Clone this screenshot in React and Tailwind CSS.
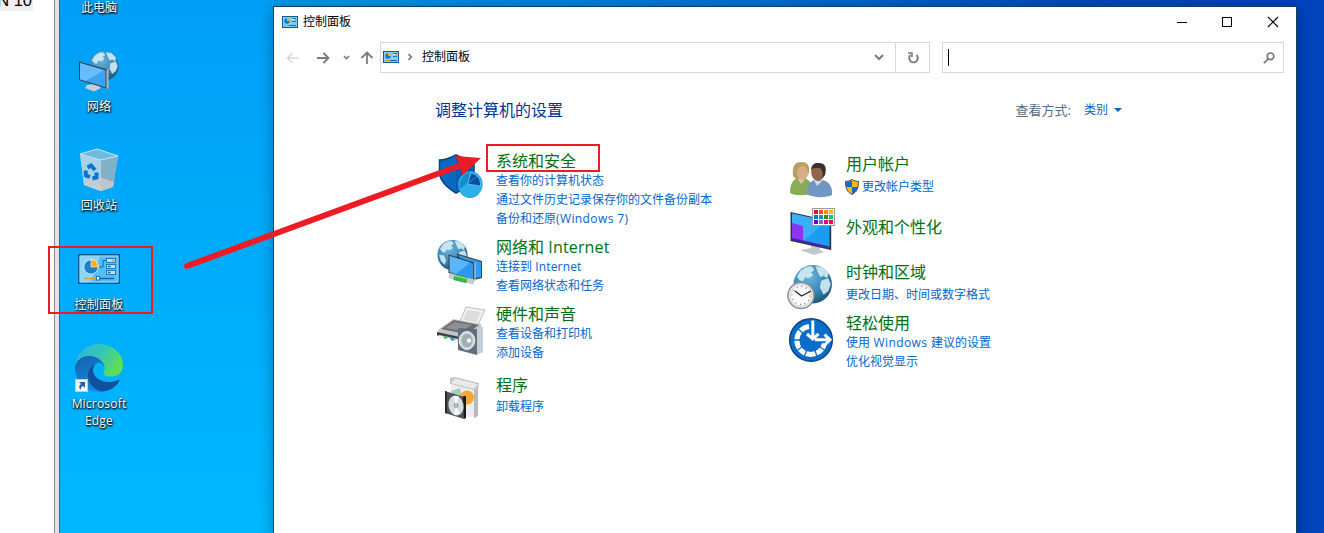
import { useId } from "react";

const GLOBE_LAND =
  "M4 11 L7 6 L12 2.5 L17 2 L19 5 L16 7 L18 10 L14 12 L11 11 L9 15 L6 14 Z M21 2 L27 3 L32 8 L31 12 L28 10 L25 11 L23 7 Z M26 15 L32 13 L34 18 L32 24 L28 27 L25 21 Z M3 18 L8 19 L10 24 L9 29 L5 25 Z";

function Globe({ x = 0, y = 0, size = 36 }) {
  const id = useId();
  return (
    <svg x={x} y={y} width={size} height={size} viewBox="0 0 36 36">
      <defs>
        <radialGradient id={id} cx="0.4" cy="0.3" r="0.75">
          <stop offset="0" stopColor="#6db7dc" />
          <stop offset="0.55" stopColor="#3b8ab8" />
          <stop offset="1" stopColor="#1d4f70" />
        </radialGradient>
      </defs>
      <circle cx="18" cy="18" r="17.5" fill={`url(#${id})`} />
      <path d={GLOBE_LAND} fill="#d5ecf3" stroke="#d5ecf3" strokeWidth="0.8" strokeLinejoin="round" opacity="0.9" />
    </svg>
  );
}

function NetworkDesktopIcon() {
  return (
    <svg width="48" height="48" viewBox="0 0 48 48">
      <Globe x={14} y={4} size={30} />
      <path d="M12 38 L22 36.500 L26 41 L19 44.500 L10 41 Z" fill="#c9d0d5" />
      <path d="M4 14.500 L32.500 22.500 V42 L4 33 Z" fill="#36444f" />
      <path d="M31.500 22.500 L33.500 22 V41.500 L31.500 42 Z" fill="#b4b8bb" />
      <path d="M5 16 L30.500 23.500 V40.200 L5 32.200 Z" fill="#3aa5f8" />
      <path d="M5 16 L29 23 L11 34 L5 32.200 Z" fill="#66bcff" />
    </svg>
  );
}

function RecycleIcon() {
  return (
    <svg width="48" height="48" viewBox="0 0 48 48">
      <path d="M5 8 L22 3 L43 10 L38 41 L26 45 L9 39 Z" fill="#98c4dd" />
      <path d="M5 8 L26 14 L26 45 L9 39 Z" fill="#a9d2e8" />
      <path d="M26 14 L43 10 L38 41 L26 45 Z" fill="#83b0c9" />
      <path d="M8.500 35 L22 30 L39 36 L38 41 L26 45 L9 39 Z" fill="#c9cacc" opacity="0.85" />
      <path d="M5 8 L22 3 L43 10 L26 14 Z" fill="#6dbbe0" stroke="#c4e3f0" strokeWidth="1" />
      <g fill="none" stroke="#0a73cf" strokeWidth="4">
        <path d="M12.500 21.500 L16 19.500 L20 24" />
        <path d="M10.500 24.500 L11 29.500 L15 31" />
        <path d="M21.500 26.500 L21.500 31.500 L17.500 32.500" />
      </g>
    </svg>
  );
}

function PanelIcon({ width = 42, height = 30 }) {
  return (
    <svg width={width} height={height} viewBox="0 0 42 30" preserveAspectRatio="none">
      <rect width="42" height="30" fill="#07598f" />
      <rect x="1.500" y="1.500" width="39" height="27" fill="#58bdf7" />
      <path d="M2 2 H22 L13 28 H2 Z" fill="#8bd5fc" />
      <path d="M2 2 H40 V28 H2 Z" fill="none" stroke="#93d7fb" strokeWidth="1" />
      <circle cx="13" cy="13" r="7.200" fill="#1d7fcb" stroke="#e4f5ff" strokeWidth="0.800" />
      <path d="M13 13 V5.500 A7.500 7.500 0 0 1 20.500 13 Z" fill="#ffb11b" stroke="#fff" strokeWidth="0.600" />
      <path d="M21 13 H25 V6.500 H28" fill="none" stroke="#0d65a8" />
      <g fill="#b5e4ff" stroke="#1474b8" strokeWidth="0.900">
        <rect x="28.500" y="4.500" width="9" height="4" />
        <rect x="28.500" y="10.500" width="9" height="4" />
        <rect x="28.500" y="16.500" width="9" height="4" />
      </g>
      <path d="M34 6.500 H36.500" stroke="#f58b1f" strokeWidth="1.500" />
      <path d="M30 12.500 H32.500 M30 18.500 H32.500" stroke="#0d65a8" strokeWidth="1.500" />
      <path d="M6 24.500 H20" stroke="#e99a26" strokeWidth="1.500" />
      <path d="M20 24.500 H36" stroke="#0c66b3" strokeWidth="1.500" />
      <rect x="18.500" y="22.500" width="3" height="3.500" fill="#fff" stroke="#1c75b5" />
    </svg>
  );
}

function TinyPanelIcon() {
  return (
    <svg width="16" height="12" viewBox="0 0 16 12">
      <rect width="16" height="12" fill="#0a5c93" />
      <rect x="1" y="1" width="14" height="10" fill="#7fd0fb" />
      <circle cx="5" cy="5" r="2.700" fill="#1976c4" />
      <path d="M5 5 V2 A3 3 0 0 1 8 5 Z" fill="#ffb11b" />
      <rect x="10" y="2.500" width="4" height="1.500" fill="#fff" />
      <path d="M10 2.500 H14 M10 5.500 H14" stroke="#1976c4" />
      <path d="M12 3.700 H14" stroke="#f58b1f" />
      <path d="M2 9.500 H7" stroke="#e99a26" />
      <path d="M7 9.500 H14" stroke="#0c66b3" />
    </svg>
  );
}

function EdgeIcon() {
  return (
    <svg width="48" height="48" viewBox="0 0 48 48">
      <defs>
        <linearGradient id="edgeTop" x1="0" y1="0.2" x2="1" y2="0.6">
          <stop offset="0" stopColor="#2fb3df" />
          <stop offset="0.5" stopColor="#35c6b8" />
          <stop offset="1" stopColor="#62e14b" />
        </linearGradient>
        <linearGradient id="edgeBody" x1="0" y1="0" x2="0.4" y2="1">
          <stop offset="0" stopColor="#1463ad" />
          <stop offset="1" stopColor="#1687e0" />
        </linearGradient>
      </defs>
      <path d="M0 23 C1 9 11 0 24 0 C38 0 48 10 48 21 C48 29 42 32.500 36 32.500 C30 32.500 27.500 31 28.500 28.500 C30 26 30.500 23 28 19.500 C25 15.500 20 12 14 12 C7 12 1 16.500 0 23 Z" fill="url(#edgeTop)" />
      <path d="M0 23 C1 16.500 7 12 14 12 C22 12 29.500 17.500 29.500 24 C29 20.500 26 18.500 24 18.500 C20 18.500 17.500 24 18 29 C19 38 26 44 34 46 C31 47.500 28 48 24 48 C11 48 0 37 0 23 Z" fill="url(#edgeBody)" />
      <path d="M20 20.500 C15 23 12 28 13 34 C15 43 24 50 34 46 C39 44 43 40 44.700 36.500 C44.500 35.500 44 35.500 43 36 C40 37.500 37 38 33 38 C25 38 18 32 18 27 C18 24 18.500 22 20 20.500 Z" fill="#11509c" />
      <rect x="0.500" y="35.500" width="12" height="12" fill="#f4f6f8" stroke="#c8cdd2" />
      <path d="M4 38 H10 V44 L8 42 C6 43 5.500 44.500 5.800 46 C3.500 43.500 4 41 6 40 Z" fill="#2460a8" />
    </svg>
  );
}

function SecurityIcon() {
  return (
    <svg width="48" height="48" viewBox="0 0 48 48">
      <path d="M3.500 8 C9 8 14 6 20 2.800 C26 6 31 8 38 8 V20 C37 30 29 37 20 41 C10 35 3.500 29 3.500 20 Z" fill="#0869c4" stroke="#0b437a" strokeWidth="1.500" />
      <path d="M20 3.500 C26 7 31 8.500 37 8.500 V20 C36 30 28 36 20 40 Z" fill="#0b5bb0" />
      <ellipse cx="34" cy="33" rx="12" ry="13" fill="#1f9fdd" />
      <path d="M24 38 A12 13 0 1 1 45 39 C38 48 26 47 24 38 Z" fill="#2db0ea" />
      <path d="M34 20 C27 22 23 28 23.500 37 L32 31 Z" fill="#158dcb" />
      <path d="M35 21 L31.500 32 L44.500 34 C45 27 41 22 35 21 Z" fill="#0a4f9f" stroke="#6ccaf5" strokeWidth="0.700" />
      <path d="M31.500 32 L41 24" stroke="#58a8e0" strokeWidth="0.700" />
    </svg>
  );
}

function InternetIcon() {
  return (
    <svg width="48" height="48" viewBox="0 0 48 48">
      <Globe x={1} y={1.5} size={31} />
      <path d="M21 15.500 L46 23 V40 L38 42 L21 30 Z" fill="#3a4854" />
      <path d="M22 17 L45 24 V39 L38 40 Z" fill="#2f9ef0" />
      <path d="M12.500 16.500 L38.500 24.500 V43 L12.500 35 Z" fill="#34414c" />
      <path d="M13.700 18 L37.200 25.400 V41.200 L13.700 34 Z" fill="#2b98ee" />
      <path d="M13.700 18 L34 24.500 L20 36 L13.700 34 Z" fill="#5ab5fb" />
      <path d="M38.500 24.500 L39.500 24.200 V42.500 L38.500 43 Z" fill="#d0d5d8" />
      <path d="M13 37.500 L38 44" stroke="#c5cbce" strokeWidth="5" />
      <path d="M18 39 L31 42.300" stroke="#3bb54a" strokeWidth="6" />
      <path d="M18 37.500 L31 40.800" stroke="#82dc82" strokeWidth="1.500" />
    </svg>
  );
}

function PrinterIcon() {
  return (
    <svg width="50" height="50" viewBox="0 0 50 50">
      <path d="M30 1 L49 4 L42 19 L24 15 Z" fill="#f1f1f1" stroke="#b0b0b0" strokeWidth="0.800" />
      <path d="M31 4 L45 6 L40 16 L27 14 Z" fill="#dcdcdc" />
      <path d="M2 24 L17 13 L45 18 L46 26 L28 37 L2 30 Z" fill="#c4c7ca" />
      <path d="M5 23 L18 14 L43 19 L30 28 Z" fill="#6a6d70" />
      <path d="M9 22 L19 16 L36 19 L26 25 Z" fill="#8e9194" />
      <path d="M1 26 L24 31 V34 L1 29.500 Z" fill="#3c4043" />
      <path d="M3 29 L22 33 L20 37 L1 32 Z" fill="#eef4f7" />
      <path d="M7 30 L13 31 L9 33 Z" fill="#43ad52" />
      <path d="M13 31 L20 33 L16 35 Z" fill="#2492dc" />
      <path d="M40 23 L47 21 V46 L41 49 Z" fill="#c2ced8" />
      <path d="M22 22 L41 23 V49 L22 44 Z" fill="#60707e" />
      <ellipse cx="31" cy="34.500" rx="7.800" ry="9" fill="#cfd7dd" stroke="#e9eef1" />
      <ellipse cx="31" cy="34.500" rx="5.500" ry="6.800" fill="#a0abb4" />
      <circle cx="33" cy="34.500" r="2.300" fill="#f5f7f8" />
    </svg>
  );
}

function ProgramsIcon() {
  return (
    <svg width="48" height="48" viewBox="0 0 48 48">
      <path d="M15 11 L40 15 V43 L15 41 Z" fill="#ededed" />
      <path d="M38 15 L42 10 V42 L38 44 Z" fill="#b9b9b9" />
      <path d="M14 4 L19 3 L43 9 L42 15 L38 16 L14 10 Z" fill="#c4c4c4" />
      <path d="M19 4.500 L42 10 L38 15 L15 9 Z" fill="#e9e9e9" />
      <path d="M15 17 L24 14 L29 39 L19 36 Z" fill="#a7cdb9" />
      <circle cx="31" cy="23.500" r="7" fill="#f3a535" />
      <path d="M9 17 L28 23 V45 L9 39 Z" fill="#4b545d" />
      <path d="M27 22.500 L30 22 V44 L28 45 Z" fill="#16191c" />
      <path d="M9 17 L11 17.500 V39.500 L9 39 Z" fill="#262b30" />
      <ellipse cx="20" cy="31.500" rx="7.500" ry="10" fill="#d5dcdd" transform="rotate(-12 20 31.500)" />
      <path d="M20 31.500 L17 22 L23 22.500 Z M20 31.500 L24 40 L18 41 Z" fill="#f9fbfb" />
      <circle cx="20" cy="31.500" r="2.300" fill="#8c979d" />
      <circle cx="20" cy="31.500" r="1" fill="#e9eef0" />
    </svg>
  );
}

function UsersIcon() {
  return (
    <svg width="48" height="48" viewBox="0 0 48 48">
      <path d="M4 38 C4 27 8 23 15 23 C22 23 27 27 27 38 C20 41 9 41 4 38 Z" fill="#8aac56" />
      <path d="M11 23 L15 29 L20 23 Z" fill="#e3c3a0" />
      <path d="M7 21 C6 11 9 7 15 7 C21 7 24 10 23 18 L18 24 H10 Z" fill="#b89f5c" />
      <ellipse cx="16.500" cy="18" rx="5.500" ry="7" fill="#d6ae8d" />
      <path d="M21 39 C21 28 25 24.500 33 24.500 C42 24.500 47 31 46 40 C40 43 27 43 21 39 Z" fill="#7097c4" />
      <path d="M28 25 L31 31 L37 25 Z" fill="#c9dcf0" />
      <path d="M25 14 C26 9 29 7.500 33 8 C39 8 41 12 39 20 L36 24 H30 Z" fill="#38302c" />
      <path d="M25.500 14 C28 12.500 31 13 34 13 C37 16 38 21 35 25 C33 27 29 26 27 23 C25 20 25 17 25.500 14 Z" fill="#90654b" />
    </svg>
  );
}

const SWATCHES = [
  ["#e81123", "#ff4343", "#ff8c00", "#ffb900"],
  ["#0078d7", "#0099bc", "#498205", "#10c46a"],
  ["#5b0ec8", "#8764b8", "#e3008c", "#ea005e"],
];

function AppearanceIcon() {
  return (
    <svg width="50" height="48" viewBox="0 0 50 48">
      <path d="M25 36 L34 38 V42 L38 44 L28 47 L14 42 L25 40 Z" fill="#c0c8cd" />
      <path d="M4.500 4 L45 13 V42 L4.500 33 Z" fill="#2d3842" />
      <path d="M45 13 L46 12.800 V41.500 L45 42 Z" fill="#d0d5d8" />
      <path d="M6 5.500 L43.500 14 V40 L6 31.500 Z" fill="#1b9cf4" />
      <path d="M6 5.500 L40 13 L17 34 L6 31.500 Z" fill="#39aefb" />
      <path d="M6 15 L17 18 V34 L6 31.500 Z" fill="#8b35f0" />
      <path d="M6 30 L43.500 38.500 V40 L6 32 Z" fill="#5414b4" />
      <rect x="26.500" y="0.500" width="22" height="17" fill="#fff" stroke="#9b9b9b" />
      {SWATCHES.map((row, r) =>
        row.map((color, c) => (
          <rect key={color} x={28 + c * 5} y={2 + r * 5} width="4" height="4" fill={color} />
        ))
      )}
    </svg>
  );
}

function ClockIcon() {
  return (
    <svg width="48" height="48" viewBox="0 0 48 48">
      <Globe x={7} y={1.5} size={39.5} />
      <circle cx="15" cy="32.500" r="13" fill="#eceeef" stroke="#8a9095" strokeWidth="1.500" />
      <circle cx="15" cy="32.500" r="10.800" fill="#fafafa" stroke="#c9cccf" strokeWidth="0.800" />
      <circle cx="15" cy="32.500" r="9" fill="none" stroke="#7b7f83" strokeWidth="1.400" strokeDasharray="1 3.710" />
      <path d="M9 28 L15.500 33 L25 28" fill="none" stroke="#252525" strokeWidth="1.300" />
    </svg>
  );
}

function EaseIcon() {
  return (
    <svg width="48" height="48" viewBox="0 0 48 48">
      <circle cx="25" cy="24" r="21.300" fill="#0a6ccb" stroke="#0b4684" strokeWidth="1.500" />
      <path d="M23 10.500 A14 14 0 1 0 38.500 27.500" fill="none" stroke="#fff" strokeWidth="5" />
      <path d="M11 12 L18 18 M7 24 H15 M10.500 35 L17 30 M18 41 L21 34 M31 41 L29 34 M40 35 L34 31" stroke="#0a6ccb" strokeWidth="1.300" />
      <path d="M26.800 4 V22" stroke="#0a6ccb" strokeWidth="5.500" />
      <path d="M26.800 4.500 V21 M21 18 L26.800 23 L32.600 18" fill="none" stroke="#fff" strokeWidth="3" />
      <path d="M29 23.800 H43 M38.500 18.500 L44 23.800 L38.500 29.200" fill="none" stroke="#fff" strokeWidth="3" />
    </svg>
  );
}

function UacShield() {
  return (
    <svg width="14" height="16" viewBox="0 0 14 16">
      <path d="M7 0.500 C9 1.800 11 2.300 13.500 2.300 C13.500 9 12 13 7 15.500 C2 13 0.500 9 0.500 2.300 C3 2.300 5 1.800 7 0.500 Z" fill="#fdb823" stroke="#45484b" />
      <path d="M7 1.500 V8 H1.300 C1 6 1 4.500 1 3 C3.500 2.800 5.500 2.300 7 1.500 Z" fill="#0c6cc8" />
      <path d="M7 8 H12.600 C11.800 11.500 10 13.500 7 15 Z" fill="#0c6cc8" />
    </svg>
  );
}

const leftCategories = [
  {
    title: "系统和安全",
    icon: <SecurityIcon />,
    row: "h-[86px]",
    iconClass: "mt-px",
    linksClass: "",
    links: ["查看你的计算机状态", "通过文件历史记录保存你的文件备份副本", "备份和还原(Windows 7)"],
  },
  {
    title: "网络和 Internet",
    icon: <InternetIcon />,
    row: "h-[67px]",
    iconClass: "mt-px",
    linksClass: "",
    links: ["连接到 Internet", "查看网络状态和任务"],
  },
  {
    title: "硬件和声音",
    icon: <PrinterIcon />,
    row: "h-[71px]",
    iconClass: "mt-0.5",
    linksClass: "",
    links: ["查看设备和打印机", "添加设备"],
  },
  {
    title: "程序",
    icon: <ProgramsIcon />,
    row: "h-[50px]",
    iconClass: "-mt-px",
    linksClass: "mt-0.5",
    links: ["卸载程序"],
  },
];

const rightCategories = [
  {
    title: "用户帐户",
    icon: <UsersIcon />,
    row: "h-[63px]",
    iconClass: "mt-px",
    linksClass: "mt-[3px]",
    shield: true,
    links: ["更改帐户类型"],
  },
  {
    title: "外观和个性化",
    icon: <AppearanceIcon />,
    row: "h-[45px]",
    iconClass: "-mt-[9px]",
    linksClass: "",
    links: [],
  },
  {
    title: "时钟和区域",
    icon: <ClockIcon />,
    row: "h-[51px]",
    iconClass: "mt-px",
    linksClass: "mt-[3px]",
    links: ["更改日期、时间或数字格式"],
  },
  {
    title: "轻松使用",
    icon: <EaseIcon />,
    row: "h-[60px]",
    iconClass: "mt-[3px]",
    linksClass: "",
    links: ["使用 Windows 建议的设置", "优化视觉显示"],
  },
];

// latin words run a little wider than the CJK text around them
function Mixed({ text }) {
  const tracking = text.includes("Windows") ? "tracking-[0.4px]" : "tracking-[0.15px]";

  return text
    .split(/([\x20-\x7e]+)/)
    .map((part, i) => (i % 2 ? <span key={i} className={`whitespace-pre ${tracking}`}>{part}</span> : part));
}

function Category({ item }) {
  return (
    <div className={`flex items-start gap-3 ${item.row}`}>
      <div className={`w-12 shrink-0 ${item.iconClass}`}>{item.icon}</div>
      <div className="whitespace-nowrap">
        <h2 className="text-base leading-5 text-[#006f12]"><Mixed text={item.title} /></h2>
        <div className={item.linksClass}>
          {item.links.map((link) => (
            <div key={link} className="flex items-center text-xs leading-[19px] text-[#0066cc]">
              {item.shield && <span className="-ml-px mr-[3px]"><UacShield /></span>}
              <a><Mixed text={link} /></a>
            </div>
          ))}
        </div>
      </div>
    </div>
  );
}

const shortcuts = [
  { label: "网络", icon: <NetworkDesktopIcon /> },
  { label: "回收站", icon: <RecycleIcon /> },
  { label: "控制面板", icon: <PanelIcon /> },
  { label: "Microsoft Edge", icon: <EdgeIcon /> },
];

function Desktop() {
  return (
    <div className="flex w-[78px] flex-col text-center text-xs leading-[17px] text-white [text-shadow:1px_1px_2px_#000,0_1px_2px_#000]">
      <div className="-mt-px">此电脑</div>
      {shortcuts.map((s) => (
        <div key={s.label} className="mt-[31px]">
          <div className="mb-[3px] flex h-12 items-center justify-center">{s.icon}</div>
          <div className="px-2 tracking-[0.2px]">{s.label}</div>
        </div>
      ))}
    </div>
  );
}

function TitleBar() {
  return (
    <div className="flex h-[29px] items-center pl-2">
      <TinyPanelIcon />
      <span className="ml-[5px] text-xs">控制面板</span>
      <svg className="ml-auto mr-4" width="104" height="12" viewBox="0 0 104 12" fill="none" stroke="#000">
        <path d="M1 6.500 H11" />
        <rect x="46.500" y="1.500" width="9" height="9" />
        <path d="M92 1 L102 11 M102 1 L92 11" strokeWidth="1.100" />
      </svg>
    </div>
  );
}

function NavBar() {
  return (
    <div className="mt-1.5 flex h-[31px] items-center pr-3">
      <svg className="shrink-0" width="106" height="31" viewBox="0 0 106 31" fill="none" stroke="#7a7a7a" strokeWidth="1.800">
        <path d="M25 16 H14 M18.500 11 L13.500 16 L18.500 21" stroke="#d8d8d8" strokeWidth="1.500" />
        <path d="M43 16 H54 M49.500 11 L54.500 16 L49.500 21" />
        <path d="M70 14 L72.500 16.500 L75 14" strokeWidth="1.700" />
        <path d="M93 22 V11 M87.500 16 L93 10.500 L98.500 16" />
      </svg>
      <div className="flex h-[31px] w-[550px] items-center border border-[#d9d9d9]">
        <div className="flex grow items-center pb-px pl-0.5 text-xs">
          <TinyPanelIcon />
          <svg className="ml-2" width="6" height="8" viewBox="0 0 6 8" fill="none" stroke="#7a7a7a" strokeWidth="1.700">
            <path d="M1.500 1.200 L4.300 4 L1.500 6.800" />
          </svg>
          <span className="ml-[9px]">控制面板</span>
        </div>
        <svg className="mr-[11px]" width="10" height="7" viewBox="0 0 10 7" fill="none" stroke="#7a7a7a" strokeWidth="2">
          <path d="M1 1 L5 5 L9 1" />
        </svg>
        <div className="flex h-full w-[34px] items-center justify-center border-l border-[#d9d9d9]">
          <svg width="12" height="12" viewBox="0 0 12 12" fill="none" stroke="#7a7a7a" strokeWidth="1.900">
            <path d="M9.500 3 A4.300 4.300 0 1 1 3.500 3" />
            <path d="M1 1 H5 V5" strokeWidth="1.600" />
          </svg>
        </div>
      </div>
      <div className="ml-3 flex h-[31px] w-[342px] items-center justify-between border border-[#d9d9d9] pl-[5px] pr-2">
        <span className="h-[17px] w-px bg-black" />
        <svg width="12" height="12" viewBox="0 0 12 12" fill="none" stroke="#7a7a7a" strokeWidth="1.700">
          <circle cx="7.500" cy="4.300" r="3.300" />
          <path d="M5.200 6.800 L0.800 11.200" />
        </svg>
      </div>
    </div>
  );
}

function ControlPanelWindow() {
  return (
    <section className="absolute left-[213px] top-1.5 h-[540px] w-[1024px] border border-[#12405f] bg-white text-black shadow-[0_2px_14px_rgba(0,0,0,0.3)]">
      <TitleBar />
      <NavBar />
      <div className="mt-[27px] flex h-5 items-center pl-[161px] pr-[174px]">
        <h1 className="text-base leading-5 text-[#003399]">调整计算机的设置</h1>
        <div className="ml-auto flex items-center text-[13px] leading-5">
          <span className="text-[#5a6a80]">查看方式:</span>
          <span className="ml-[13px] text-xs leading-5 text-[#0066cc]">类别</span>
          <svg className="ml-1.5" width="8" height="4" viewBox="0 0 8 4">
            <path d="M0 0 H8 L4 4 Z" fill="#0066cc" />
          </svg>
        </div>
      </div>
      <div className="mt-[31px] flex pl-[162px]">
        <div className="w-[350px]">
          {leftCategories.map((item) => <Category key={item.title} item={item} />)}
        </div>
        <div className="pt-[3px]">
          {rightCategories.map((item) => <Category key={item.title} item={item} />)}
        </div>
      </div>
    </section>
  );
}

function Annotations() {
  return (
    <svg className="pointer-events-none absolute inset-0" width="1324" height="533" viewBox="0 0 1324 533">
      <g fill="none" stroke="#ed1c24" strokeWidth="2">
        <rect x="49" y="247" width="103" height="66" />
        <rect x="487" y="145" width="112" height="26" />
      </g>
      <path d="M187 266 L463 164.500" stroke="#ed1c24" strokeWidth="6" strokeLinecap="round" />
      <path d="M481 158 L455.500 156 L460 165 L462.500 175.500 Z" fill="#ed1c24" />
    </svg>
  );
}

export default function App() {
  return (
    <main className="relative flex h-[533px] w-[1324px] overflow-hidden bg-white font-['Open_Sans','Noto_Sans_CJK_SC',sans-serif]">
      <aside className="w-[54px] shrink-0">
        <div className="flex h-[11px] w-[33px] items-end justify-end bg-[#efefef] pb-px pr-px font-['Liberation_Sans',sans-serif] text-[16.5px] leading-[19px] whitespace-nowrap text-black">
          N 10
        </div>
      </aside>
      <div className="w-1.5 shrink-0 border-l border-r border-l-[#858990] border-r-[#4d6170] bg-[#e3e3e6]" />
      <div className="relative grow overflow-hidden bg-[linear-gradient(#009ff7,#00b8ff),linear-gradient(90deg,#009ff7_0%,#0098ec_18%,#0084e0_40%,#0066ce_63%,#0048bd_82%,#0043bd_100%)] bg-[length:214px_100%,100%_100%] bg-no-repeat">
        <Desktop />
        <ControlPanelWindow />
      </div>
      <Annotations />
    </main>
  );
}
